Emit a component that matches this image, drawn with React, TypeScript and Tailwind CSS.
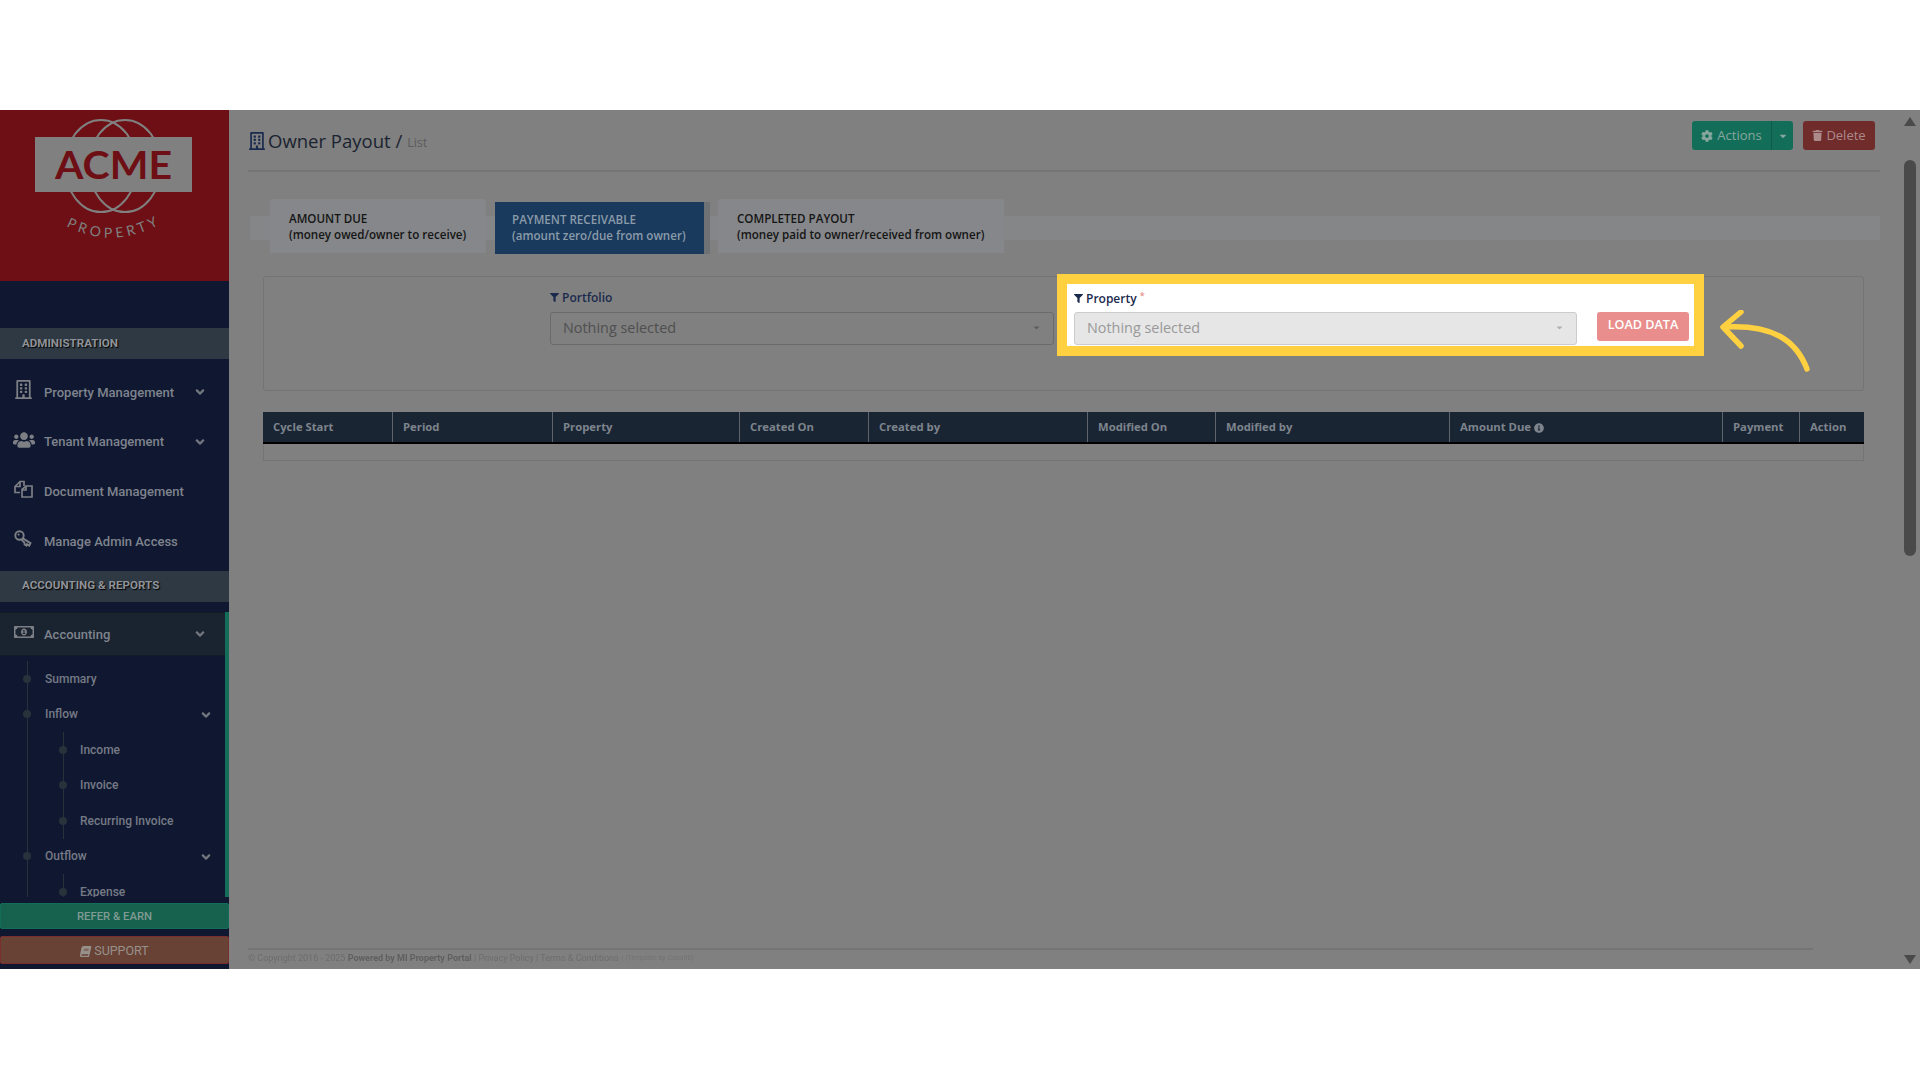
import { ReactNode } from "react";
import {
  FaAngleDown,
  FaBook,
  FaCaretDown,
  FaCog,
  FaFilter,
  FaInfoCircle,
  FaRegBuilding,
  FaRegMoneyBillAlt,
  FaTrash,
  FaUsers,
} from "react-icons/fa";

const columns = [
  { label: "Cycle Start", width: "w-[129px]" },
  { label: "Period", width: "w-[160px]" },
  { label: "Property", width: "w-[187px]" },
  { label: "Created On", width: "w-[129px]" },
  { label: "Created by", width: "w-[219px]" },
  { label: "Modified On", width: "w-[128px]" },
  { label: "Modified by", width: "w-[234px]" },
  { label: "Amount Due", width: "w-[273px]", info: true },
  { label: "Payment", width: "w-[77px]" },
  { label: "Action", width: "w-[65px]" },
];

function Logo() {
  return (
    <svg viewBox="0 0 229 171" className="h-[171px] w-[229px]">
      <ellipse cx="101" cy="56" rx="36" ry="46" fill="none" stroke="#808080" strokeWidth="2" />
      <ellipse cx="125" cy="56" rx="36" ry="46" fill="none" stroke="#808080" strokeWidth="2" />
      <rect x="35" y="27" width="157" height="55" fill="#808080" />
      <text
        x="55"
        y="69"
        textLength="117"
        lengthAdjust="spacingAndGlyphs"
        fill="#6d0f14"
        fontSize="39"
        fontWeight="700"
        fontFamily="Lato, sans-serif"
      >
        ACME
      </text>
      <path id="logo-arc" d="M 64 115 Q 113 142 164 112" fill="none" />
      <text fill="#808080" fontSize="14" fontFamily="Lato, sans-serif" letterSpacing="3.8">
        <textPath href="#logo-arc" startOffset="50%" textAnchor="middle">
          PROPERTY
        </textPath>
      </text>
    </svg>
  );
}

function FilesIcon() {
  return (
    <svg viewBox="0 0 19 18" className="h-[18px] w-[19px]" fill="none" stroke="currentColor" strokeWidth="1.7">
      <path d="M6 12.5H1V6.5L6 1.5H10V6" />
      <path d="M6 1.5V6.5H1" />
      <path d="M8 17V9.5L12 6H18V17Z" />
      <path d="M12 6V10H8" />
    </svg>
  );
}

function KeyIcon() {
  return (
    <svg viewBox="0 0 18 18" className="h-[18px] w-[18px]" fill="none" stroke="currentColor" strokeWidth="1.9">
      <circle cx="5.5" cy="5.5" r="4.2" />
      <circle cx="4.6" cy="4.6" r="0.8" fill="currentColor" strokeWidth="0.5" />
      <path d="M8.8 8.4L16.5 13.2L15.2 15.6L13 14.2L12.4 15.6L10.6 14.4L10.4 12.6L7.6 9.8" />
    </svg>
  );
}

function SectionHeader({ children, className }: { children: ReactNode; className?: string }) {
  return (
    <div className={`flex h-[31px] shrink-0 items-center bg-[#2e3944] pl-[22px] text-[11.6px] font-bold text-[#8e9298] [text-shadow:1px_1px_1px_#000] ${className ?? ""}`}>
      {children}
    </div>
  );
}

function NavRow({ icon, label, chevron }: { icon: ReactNode; label: string; chevron?: boolean }) {
  return (
    <div className="flex h-[49.75px] items-center text-[13px] font-medium text-[#7f838e]">
      <span className="mb-[4px] flex w-[44px] justify-start pl-[14px] text-[#7d7f85]">{icon}</span>
      <span className="flex-1 pt-[1px]">{label}</span>
      {chevron && <FaAngleDown className="mr-[22px] text-[14px] text-[#72767f]" />}
    </div>
  );
}

function SubRow({
  label,
  level,
  chevron,
  subLine,
  last,
}: {
  label: string;
  level: 1 | 2;
  chevron?: boolean;
  subLine?: boolean;
  last?: boolean;
}) {
  return (
    <div
      className={
        last
          ? "relative flex h-[23px] items-center pt-[12px] text-[12px] font-medium text-[#767a86]"
          : "relative flex h-[35.5px] items-center text-[12px] font-medium text-[#767a86]"
      }
    >
      <span className="absolute top-0 bottom-0 left-[27px] w-px bg-[#27323a]" />
      {(level === 2 || subLine) && <span className="absolute top-0 bottom-0 left-[63px] w-px bg-[#27323a]" />}
      <span
        className={
          level === 1
            ? "absolute left-[23px] h-[8px] w-[8px] rounded-full bg-[#27323a]"
            : "absolute left-[59px] h-[8px] w-[8px] rounded-full bg-[#27323a]"
        }
      />
      <span className={level === 1 ? "ml-[45px] flex-1" : "ml-[80px] flex-1"}>{label}</span>
      {chevron && <FaAngleDown className="mt-[2px] mr-[12px] text-[14px] text-[#72767f]" />}
    </div>
  );
}

function Sidebar() {
  return (
    <aside className="flex h-full w-[229px] shrink-0 flex-col bg-[#0f1830] font-['Roboto',sans-serif]">
      <div className="h-[171px] shrink-0 bg-[#6d0f14]">
        <Logo />
      </div>
      <div className="h-[47px] shrink-0" />
      <SectionHeader>ADMINISTRATION</SectionHeader>
      <div className="mt-[8px] mb-[5px] shrink-0">
        <NavRow icon={<FaRegBuilding className="text-[19px]" />} label="Property Management" chevron />
        <NavRow icon={<FaUsers className="-ml-px text-[22px]" />} label="Tenant Management" chevron />
        <NavRow icon={<FilesIcon />} label="Document Management" />
        <NavRow icon={<KeyIcon />} label="Manage Admin Access" />
      </div>
      <SectionHeader className="pb-[1px]">ACCOUNTING &amp; REPORTS</SectionHeader>
      <div className="mt-[10px] h-[285px] shrink-0 overflow-hidden border-r-4 border-[#136e59]">
        <div className="h-[44px] border-y border-[#121a24] bg-[#1a2430] pr-0 [&>div]:h-full [&>div>svg]:mr-[18px]">
          <NavRow icon={<FaRegMoneyBillAlt className="text-[20px]" />} label="Accounting" chevron />
        </div>
        <div className="h-[5px]" />
        <SubRow label="Summary" level={1} />
        <SubRow label="Inflow" level={1} chevron />
        <SubRow label="Income" level={2} />
        <SubRow label="Invoice" level={2} />
        <SubRow label="Recurring Invoice" level={2} />
        <SubRow label="Outflow" level={1} chevron />
        <SubRow label="Expense" level={2} last />
      </div>
      <div className="mt-[6px] flex h-[26px] shrink-0 items-center justify-center rounded-[2px] border border-[#136e59] bg-[#16624e] pt-[3px] text-[11.3px] font-medium text-[#7f9a92]">
        REFER &amp; EARN
      </div>
      <div className="mt-[7px] flex h-[28px] shrink-0 items-center justify-center gap-[3px] rounded-[2px] border border-[#7a2e2e] bg-[#694236] pt-[2px] text-[12.5px] text-[#97908b]">
        <FaBook className="-skew-x-12 text-[11px]" />
        SUPPORT
      </div>
    </aside>
  );
}

function SelectBox({ className }: { className: string }) {
  return (
    <div className={`flex items-center justify-between rounded-[3px] border pr-[12px] pb-[2px] pl-[12px] text-[14.4px] ${className}`}>
      <span>Nothing selected</span>
      <FaCaretDown className="text-[9px] opacity-70" />
    </div>
  );
}

function Tab({ title, sub, width, active }: { title: string; sub: string; width: string; active?: boolean }) {
  if (active) {
    return (
      <div className={`mt-[3px] flex h-[52px] flex-col justify-center border-r-[6px] border-[#6f7274] bg-[#193a5c] pl-[17px] text-[11.6px] leading-[16px] font-semibold text-[#8b9baa] ${width}`}>
        <span>{title}</span>
        <span>{sub}</span>
      </div>
    );
  }
  return (
    <div className={`flex h-[54px] flex-col justify-center rounded-t-[3px] bg-[#85878a] pt-[2px] pl-[19px] text-[11.6px] leading-[16px] font-semibold text-[#151515] ${width}`}>
      <span>{title}</span>
      <span>{sub}</span>
    </div>
  );
}

function Spotlight() {
  return (
    <>
      <div className="absolute top-[164px] left-[828px] h-[82px] w-[647px] border-[10px] border-[#ffd03f] bg-white">
        <div className="flex h-[24px] items-center pt-[5px] pl-[7px] text-[12px] font-semibold text-[#1a2a4d]">
          <FaFilter className="mr-[3px] text-[9px]" />
          Property
          <span className="mb-[6px] ml-[3px] text-[9px] text-[#e98e8c]">*</span>
        </div>
        <div className="mt-[4px] flex items-start pl-[7px]">
          <SelectBox className="h-[33px] w-[503px] border-[#cccccc] bg-[#e6e6e6] text-[#999999]" />
          <div className="ml-[20px] flex h-[29px] w-[92px] items-center justify-center rounded-[3px] bg-[#e98e8c] pb-[2px] text-[12.6px] font-semibold text-white">
            LOAD DATA
          </div>
        </div>
      </div>
      <svg
        viewBox="0 0 100 70"
        className="absolute top-[200px] left-[1491px] h-[70px] w-[100px]"
        fill="none"
        stroke="#ffd03f"
        strokeWidth="5.5"
        strokeLinecap="round"
        strokeLinejoin="round"
      >
        <path d="M 87 59 C 76 30 52 14 4 17" />
        <path d="M 21 2 L 3 17 L 21 36" />
      </svg>
    </>
  );
}

function Scrollbar() {
  return (
    <div className="flex w-[20px] shrink-0 flex-col items-center pt-[7px] pb-[5px]">
      <span className="h-0 w-0 border-x-[6px] border-b-[9px] border-x-transparent border-b-[#4a4a4a]" />
      <div className="mt-[34px] h-[396px] w-[12px] rounded-[6px] bg-[#4a4a4a]" />
      <div className="flex-1" />
      <span className="h-0 w-0 border-x-[6px] border-t-[9px] border-x-transparent border-t-[#4a4a4a]" />
    </div>
  );
}

function MainContent() {
  return (
    <main className="relative flex h-full flex-1 bg-[#808080] font-['Open_Sans',sans-serif]">
      <div className="flex min-w-0 flex-1 flex-col pl-[19px]">
        <div className="mr-[20px] flex h-[62px] shrink-0 items-start justify-between border-b-2 border-[#747474]">
          <div className="mt-[19px] flex items-center text-[#1a2330]">
            <FaRegBuilding className="mr-[2px] text-[18px] text-[#1a2a4d]" />
            <span className="text-[18.5px] leading-[24px]">Owner Payout /</span>
            <span className="mt-[4px] ml-[5px] text-[12.5px] text-[#5c5c5c]">List</span>
          </div>
          <div className="mt-[11px] mr-[5px] flex items-center text-[13px]">
            <div className="flex h-[29px] w-[79px] items-center justify-center gap-[4px] rounded-l-[3px] bg-[#136e59] text-[#86a69e]">
              <FaCog className="text-[12px]" />
              Actions
            </div>
            <div className="flex h-[29px] w-[22px] items-center justify-center rounded-r-[3px] border-l border-[#0f5a49] bg-[#136e59] text-[#86a69e]">
              <FaCaretDown className="text-[10px]" />
            </div>
            <div className="ml-[10px] flex h-[29px] w-[72px] items-center justify-center gap-[3px] rounded-[3px] bg-[#702b2b] text-[#ac8a8a]">
              <FaTrash className="text-[11px]" />
              Delete
            </div>
          </div>
        </div>

        <div className="mt-[27px] mr-[20px] ml-[2px] flex h-[55px] shrink-0 gap-[9px] bg-[linear-gradient(to_bottom,transparent_17px,#848688_17px,#848688_41px,transparent_41px)] pl-[20px]">
          <Tab title="AMOUNT DUE" sub="(money owed/owner to receive)" width="w-[216px]" />
          <Tab title="PAYMENT RECEIVABLE" sub="(amount zero/due from owner)" width="w-[215px]" active />
          <Tab title="COMPLETED PAYOUT" sub="(money paid to owner/received from owner)" width="-ml-[1px] w-[286px]" />
        </div>

        <div className="mt-[22px] ml-[15px] h-[115px] w-[1601px] shrink-0 rounded-[3px] border border-[#747474] pl-[286px]">
          <div className="mt-[11px] mb-[5px] flex h-[19px] items-center text-[12px] font-semibold text-[#1a2a4d]">
            <FaFilter className="mr-[3px] text-[9px]" />
            Portfolio
          </div>
          <SelectBox className="h-[33px] w-[504px] border-[#6a6a6a] text-[#4f4f4f]" />
        </div>

        <div className="mt-[21px] ml-[15px] w-[1601px] shrink-0 border-x border-b border-[#747474]">
          <div className="-mx-px flex h-[32px] border-b-2 border-black bg-[#1a2534]">
            {columns.map((col) => (
              <div
                key={col.label}
                className={`flex shrink-0 items-center gap-[3px] border-l border-[#5e646c] pt-[1px] pl-[10px] text-[11.3px] font-bold text-[#7d848c] first:border-l-0 ${col.width}`}
              >
                {col.label}
                {col.info && <FaInfoCircle className="text-[10px]" />}
              </div>
            ))}
          </div>
          <div className="h-[16px]" />
        </div>

        <div className="flex-1" />
        <div className="mr-[87px] flex h-[21px] shrink-0 items-center gap-[3px] border-t-2 border-[#747474] pb-[2px] font-['Roboto',sans-serif] text-[9px] whitespace-nowrap text-[#6c6c6c]">
          <span className="blur-[0.3px]">
            © Copyright 2016 - 2025 <span className="font-bold text-[#5f5f5f]">Powered by MI Property Portal</span> |
            Privacy Policy | Terms &amp; Conditions
          </span>
          <span className="text-[7px] text-[#737373] blur-[0.3px]">| (Template by Colorlib)</span>
        </div>
      </div>
      <Scrollbar />
      <Spotlight />
    </main>
  );
}

export default function App() {
  return (
    <div className="flex h-[1080px] w-[1920px] flex-col overflow-hidden bg-white">
      <div className="h-[110px] shrink-0" />
      <div className="flex h-[859px] shrink-0">
        <Sidebar />
        <MainContent />
      </div>
    </div>
  );
}
